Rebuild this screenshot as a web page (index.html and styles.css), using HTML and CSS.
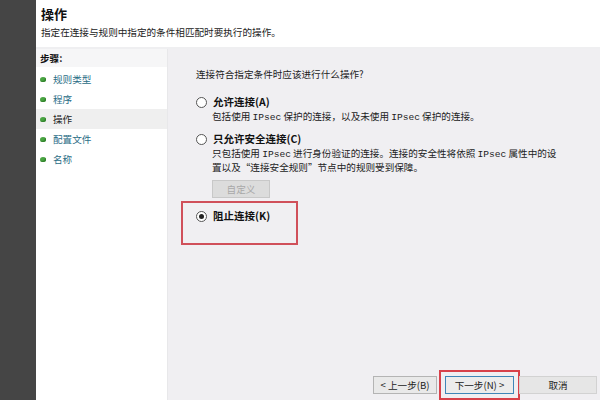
FILE: index.html
```html
<!DOCTYPE html>
<html lang="zh-CN">
<head>
    <meta charset="UTF-8">
    <title>新建入站规则向导 - 操作</title>
    <link rel="stylesheet" href="styles.css">
</head>
<body>
    <div class="strip"></div>

    <div class="wizard">
        <!-- 页头 -->
        <div class="head">
            <h1>操作</h1>
            <p>指定在连接与规则中指定的条件相匹配时要执行的操作。</p>
        </div>

        <div class="panes">
            <!-- 步骤列表 -->
            <div class="steps">
                <div class="steps-title">步骤:</div>
                <ul>
                    <li><span class="dot"></span><a>规则类型</a></li>
                    <li><span class="dot"></span><a>程序</a></li>
                    <li class="current"><span class="dot"></span><a>操作</a></li>
                    <li><span class="dot"></span><a>配置文件</a></li>
                    <li><span class="dot"></span><a>名称</a></li>
                </ul>
            </div>

            <!-- 内容 -->
            <div class="content">
                <p class="question">连接符合指定条件时应该进行什么操作?</p>

                <div class="option first">
                    <label><span class="radio"></span>允许连接(A)</label>
                    <p class="desc">包括使用 <span class="mono">IPsec</span> 保护的连接，以及未使用 <span class="mono">IPsec</span> 保护的连接。</p>
                </div>

                <div class="option">
                    <label><span class="radio"></span>只允许安全连接(C)</label>
                    <p class="desc">只包括使用 <span class="mono">IPsec</span> 进行身份验证的连接。连接的安全性将依照 <span class="mono">IPsec</span> 属性中的设<br>置以及“连接安全规则”节点中的规则受到保障。</p>
                    <button class="custom" disabled>自定义</button>
                </div>

                <div class="option block">
                    <label><span class="radio checked"></span>阻止连接(K)</label>
                </div>

                <div class="actions">
                    <button class="prev">&lt; 上一步(B)</button>
                    <button class="next">下一步(N) &gt;</button>
                    <button class="cancel">取消</button>
                </div>
            </div>
        </div>
    </div>
</body>
</html>
```

FILE: styles.css
```css
body {
    margin: 0;
    width: 600px;
    height: 400px;
    overflow: hidden;
    display: flex;
    font-family: "Noto Sans CJK SC", "Liberation Sans", sans-serif;
    font-size: 9.6px;
    color: #222;
}

.strip { width: 36px; background: #454545; flex-shrink: 0; }

.wizard { flex: 1; display: flex; flex-direction: column; background: #fff; }

/* 页头 */
.head { height: 41px; padding: 6px 0 0 5px; border-bottom: 2px solid #efeff1; }
.head h1 { margin: 0; font-size: 13px; line-height: 16px; font-weight: bold; color: #111; }
.head p { margin: 3px 0 0; font-size: 9.6px; line-height: 14px; color: #222; }

.panes { flex: 1; display: flex; }

/* 步骤 */
.steps { width: 131px; border-right: 1px solid #e8e8ea; background: #fff; }
.steps-title { height: 18px; line-height: 18px; padding-left: 4px; background: #f6f6f7; font-weight: bold; color: #111; }
.steps ul { list-style: none; margin: 2px 0 0; padding: 0; }
.steps li { height: 20px; display: flex; align-items: center; padding-left: 4px; }
.steps li.current { background: #efefef; }
.steps li a { color: #2a6d86; }
.steps li.current a { color: #222; }
.dot { width: 6px; height: 5px; border-radius: 50%; background: #4aa542; margin-right: 7px; box-shadow: inset -1px -1px 1px #2f7f2a; }

/* 内容 */
.content { flex: 1; background: #f0eff2; padding: 0 3px 0 28px; display: flex; flex-direction: column; }
.question { margin: 19px 0 0; line-height: 12px; }

.option { margin-top: 8px; }
.option.first { margin-top: 15px; }
.option label { display: flex; align-items: center; font-size: 10.5px; font-weight: bold; color: #111; line-height: 14px; }
.radio { width: 9px; height: 9px; border: 1px solid #555; border-radius: 50%; background: #fff; margin-right: 6px; position: relative; }
.radio.checked::after { content: ""; position: absolute; left: 2px; top: 2px; width: 5px; height: 5px; border-radius: 50%; background: #222; }
.desc { margin: 1px 0 0 16px; line-height: 13px; color: #222; }
.mono { font-family: "Liberation Mono", monospace; font-size: 9.6px; }

.custom { display: block; margin: 6px 0 0 16px; width: 58px; height: 18px; border: 1px solid #c8c8c8; background: #dcdcdc; color: #a8a8a8; font-family: inherit; font-size: 9.6px; padding: 0; }

.option.block { margin: 3px 0 0 -15px; width: 117px; height: 44px; border: 2px solid #d0505a; padding: 6px 0 0 13px; box-sizing: border-box; }

/* 按钮 */
.actions { margin-top: auto; margin-bottom: 6px; display: flex; justify-content: flex-end; }
.actions button { height: 18px; padding: 0; font-family: inherit; font-size: 9.6px; color: #222; background: #e9e9e9; border: 1px solid #b4b4b4; }
.prev { width: 64px; }
.next { width: 69px; margin-left: 8px; border: 1px solid #3f86b8 !important; background: #ececec !important; outline: 2px solid #d8414a; outline-offset: 4px; }
.cancel { width: 78px; margin-left: 5px; background: #e6e6e6 !important; border-color: #d2d2d2 !important; }
```
